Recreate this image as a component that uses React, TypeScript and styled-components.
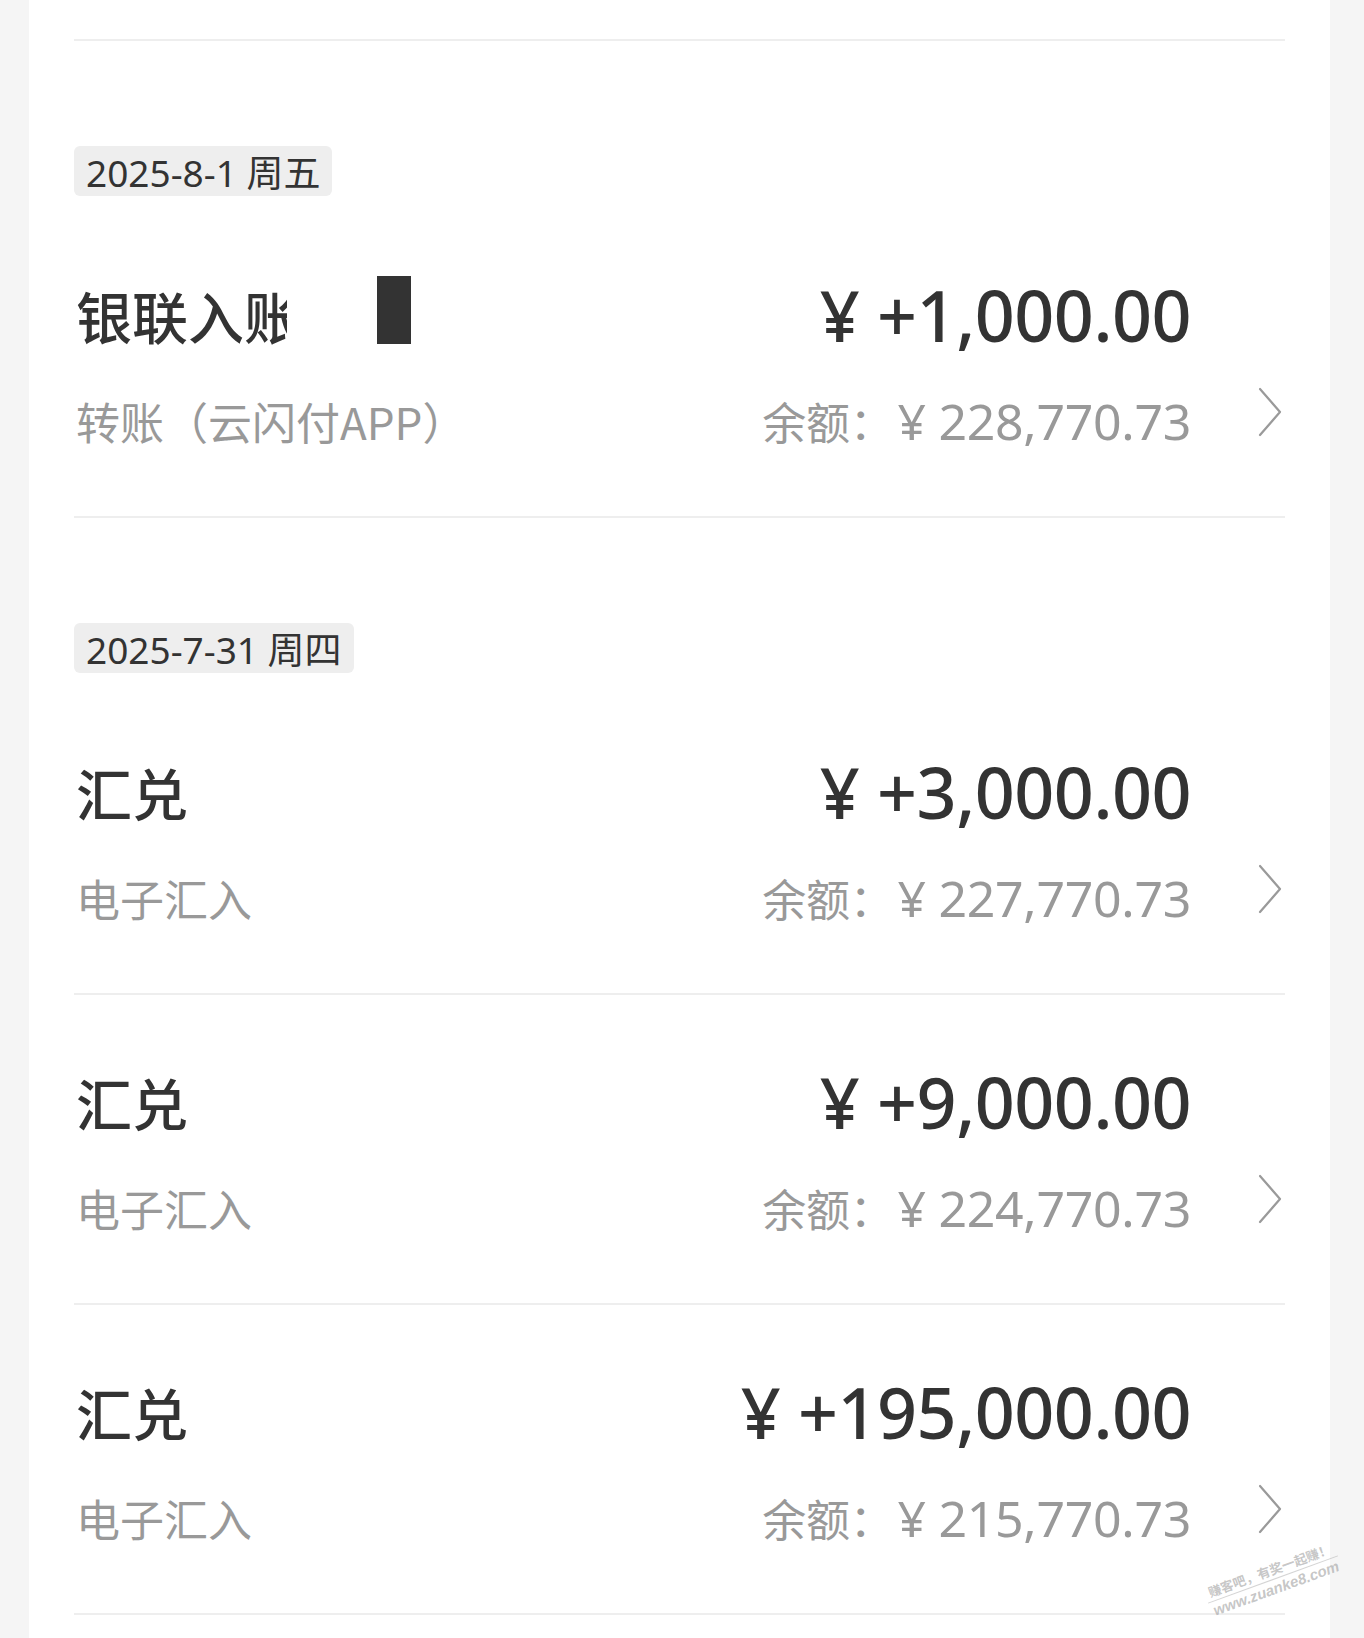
import React from "react";
import styled, { createGlobalStyle } from "styled-components";

const GlobalStyle = createGlobalStyle`
  html, body {
    margin: 0;
    padding: 0;
    background: #f5f5f5;
  }
  body {
    font-family: "Noto Sans", "Noto Sans CJK SC", sans-serif;
  }
`;

const Page = styled.div`
  position: relative;
  background: #f5f5f5;
  min-height: 1638px;
  padding: 0 34px 0 29px;
  box-sizing: border-box;
  overflow: hidden;
`;

const Card = styled.div`
  background: #ffffff;
  min-height: 1638px;
  padding: 0 45px;
  box-sizing: border-box;
`;

const TopStub = styled.div`
  height: 39px;
  border-bottom: 2px solid #eeeeee;
`;

const Group = styled.section`
  padding-top: 105px;
`;

const PillRow = styled.div`
  display: flex;
`;

const DatePill = styled.div`
  display: inline-flex;
  align-items: center;
  height: 50px;
  padding: 0 12px;
  margin-bottom: 12px;
  background: #eeeeee;
  border-radius: 6px;
  font-family: "Noto Sans", "Noto Sans CJK SC", sans-serif;
  font-size: 37px;
  color: #333333;
`;

const Row = styled.div`
  display: grid;
  grid-template-columns: 1fr auto 94px;
  grid-template-rows: 74px 60px;
  row-gap: 39px;
  padding: 70px 0 65px;
  border-bottom: 2px solid #eeeeee;
`;

const TitleLine = styled.div`
  grid-column: 1;
  grid-row: 1;
  display: flex;
  align-items: center;
  min-width: 0;
`;

const Title = styled.div`
  font-family: "Noto Sans CJK SC", sans-serif;
  font-size: 56px;
  font-weight: 500;
  color: #333333;
  line-height: 74px;
  white-space: nowrap;
  margin-left: 2px;
`;

const ClippedTitle = styled(Title)<{ $width: number }>`
  overflow: hidden;
  width: ${(p) => p.$width}px;
`;

const Redaction = styled.div`
  width: 34px;
  height: 68px;
  margin-left: 90px;
  margin-top: -10px;
  background: #333333;
`;

const Sub = styled.div`
  grid-column: 1;
  grid-row: 2;
  font-family: "Noto Sans CJK SC", sans-serif;
  font-size: 44px;
  color: #999999;
  line-height: 60px;
  white-space: nowrap;
  margin-left: 2px;
`;

const Amount = styled.div`
  grid-column: 2;
  grid-row: 1;
  justify-self: end;
  font-family: "Noto Sans", "Noto Sans CJK SC", sans-serif;
  font-size: 70px;
  font-weight: 500;
  color: #333333;
  line-height: 74px;
  white-space: nowrap;
  letter-spacing: -0.5px;
`;

const Balance = styled.div`
  grid-column: 2;
  grid-row: 2;
  justify-self: end;
  font-family: "Noto Sans", "Noto Sans CJK SC", sans-serif;
  font-size: 50px;
  color: #999999;
  line-height: 60px;
  white-space: nowrap;
  letter-spacing: -0.3px;
`;

const Label = styled.span`
  font-family: "Noto Sans CJK SC", sans-serif;
  font-size: 44px;
  margin-right: 4px;
`;

const ChevronCell = styled.div`
  grid-column: 3;
  grid-row: 2;
  justify-self: end;
  align-self: start;
  margin-top: -4px;
  margin-right: 2px;
  display: flex;
`;

const Watermark = styled.div`
  position: absolute;
  right: 22px;
  bottom: 40px;
  transform: rotate(-20deg);
  display: flex;
  flex-direction: column;
  align-items: center;
  pointer-events: none;
`;

const WatermarkTop = styled.div`
  font-family: "Noto Sans CJK SC", sans-serif;
  font-size: 13px;
  line-height: 17px;
  font-weight: 700;
  color: rgba(150, 150, 150, 0.55);
  padding: 0 4px 1px;
  border-bottom: 1px solid rgba(170, 170, 170, 0.5);
`;

const WatermarkBottom = styled.div`
  font-family: "Liberation Sans", sans-serif;
  font-size: 15px;
  line-height: 18px;
  font-weight: 700;
  font-style: italic;
  color: rgba(150, 150, 150, 0.55);
`;

const Chevron = () => (
  <svg width="26" height="50" viewBox="0 0 26 50" fill="none">
    <path
      d="M3 2 L23 25 L3 48"
      stroke="#9a9a9a"
      strokeWidth="2.2"
      strokeLinecap="round"
      strokeLinejoin="round"
    />
  </svg>
);

type Tx = {
  title: string;
  clip?: number;
  redacted?: boolean;
  sub: string;
  amount: string;
  balance: string;
};

const groups: { date: string; items: Tx[] }[] = [
  {
    date: "2025-8-1 周五",
    items: [
      {
        title: "银联入账",
        clip: 211,
        redacted: true,
        sub: "转账（云闪付APP）",
        amount: "¥ +1,000.00",
        balance: "¥ 228,770.73",
      },
    ],
  },
  {
    date: "2025-7-31 周四",
    items: [
      { title: "汇兑", sub: "电子汇入", amount: "¥ +3,000.00", balance: "¥ 227,770.73" },
      { title: "汇兑", sub: "电子汇入", amount: "¥ +9,000.00", balance: "¥ 224,770.73" },
      { title: "汇兑", sub: "电子汇入", amount: "¥ +195,000.00", balance: "¥ 215,770.73" },
    ],
  },
];

export default function App() {
  return (
    <>
      <GlobalStyle />
      <Page>
        <Card>
          <TopStub />
          {groups.map((g) => (
            <Group key={g.date}>
              <PillRow>
                <DatePill>{g.date}</DatePill>
              </PillRow>
              {g.items.map((t, i) => (
                <Row key={i}>
                  <TitleLine>
                    {t.clip ? (
                      <ClippedTitle $width={t.clip}>{t.title}</ClippedTitle>
                    ) : (
                      <Title>{t.title}</Title>
                    )}
                    {t.redacted && <Redaction />}
                  </TitleLine>
                  <Sub>{t.sub}</Sub>
                  <Amount>{t.amount}</Amount>
                  <Balance>
                    <Label>余额：</Label>
                    {t.balance}
                  </Balance>
                  <ChevronCell>
                    <Chevron />
                  </ChevronCell>
                </Row>
              ))}
            </Group>
          ))}
        </Card>
        <Watermark>
          <WatermarkTop>赚客吧，有奖一起赚！</WatermarkTop>
          <WatermarkBottom>www.zuanke8.com</WatermarkBottom>
        </Watermark>
      </Page>
    </>
  );
}
